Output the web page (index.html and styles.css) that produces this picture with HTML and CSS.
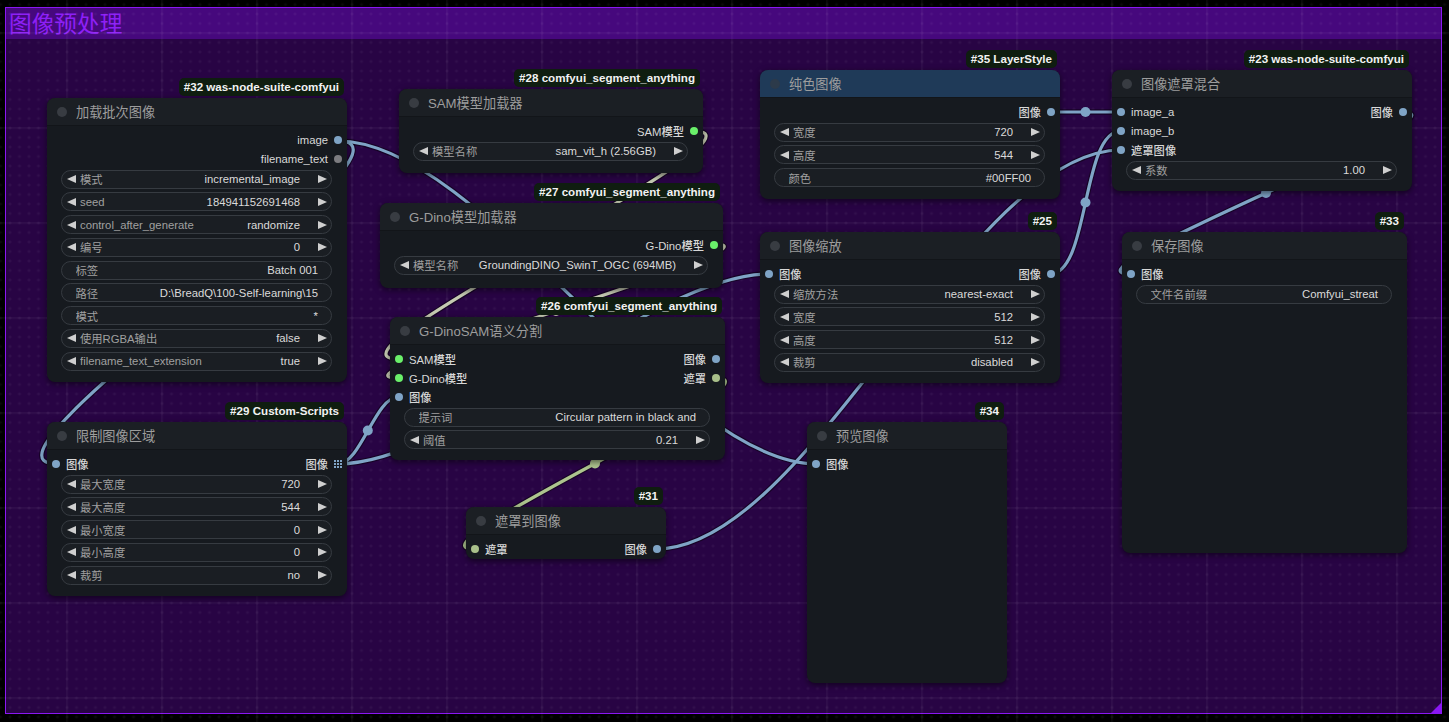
FILE: index.html
```html
<!DOCTYPE html>
<html lang="zh">
<head>
<meta charset="utf-8">
<title>图像预处理</title>
<link rel="stylesheet" href="styles.css">
</head>
<body>
<div class="canvas">
  <div class="group">
    <div class="group-title">图像预处理</div>
    <div class="group-resize"></div>
  </div>

  <svg class="grid" width="1449" height="722" viewBox="0 0 1449 722">
    <defs>
      <pattern id="plus" x="62.25" y="28.25" width="9.5" height="9.5" patternUnits="userSpaceOnUse">
        <path d="M3.25 4.75h3M4.75 3.25v3" stroke="rgba(255,255,255,0.055)" stroke-width="1" fill="none"/>
      </pattern>
      <pattern id="lines" x="66.25" y="32.25" width="95" height="95" patternUnits="userSpaceOnUse">
        <rect x="0" y="0" width="1.5" height="95" fill="rgba(255,255,255,0.05)"/>
        <rect x="1.5" y="0" width="93.5" height="1.5" fill="rgba(255,255,255,0.05)"/>
      </pattern>
    </defs>
    <rect width="1449" height="722" fill="url(#plus)"/>
    <rect width="1449" height="722" fill="url(#lines)"/>
  </svg>

  <svg class="links" width="1449" height="722" viewBox="0 0 1449 722">
    <defs>
      <path id="l1" d="M338 141 C445 141 -50 464 57 464"/>
      <path id="l2" d="M338 141 C482.5 141 672.5 464 817 464"/>
      <path id="l3" d="M338 464 C360.5 464 375.5 397 398 397"/>
      <path id="l4" d="M338 464 C455.8 464 651.2 274 769 274"/>
      <path id="l5" d="M694 131 C787.4 131 304.6 359 398 359"/>
      <path id="l6" d="M714 244 C799.8 244 312.2 378 398 378"/>
      <path id="l7" d="M716 378 C790 378 400 549 474 549"/>
      <path id="l9" d="M656 549 C809.2 549 967.8 150 1121 150"/>
      <path id="l10" d="M1050 112 C1067.75 112 1103.25 112 1121 112"/>
      <path id="l11" d="M1050 274 C1089.9 274 1081.1 131 1121 131"/>
      <path id="l12" d="M1402 112 C1481.1 112 1050.9 274 1130 274"/>
    </defs>
    <g fill="none" stroke="rgba(0,0,0,0.45)" stroke-width="5.5">
      <use href="#l1"/><use href="#l2"/><use href="#l3"/><use href="#l4"/><use href="#l5"/><use href="#l6"/>
      <use href="#l7"/><use href="#l9"/><use href="#l10"/><use href="#l11"/><use href="#l12"/>
    </g>
    <g fill="none" stroke-width="3.2" stroke-linecap="round">
      <g stroke="#7fa4c6">
        <use href="#l1"/><use href="#l2"/><use href="#l3"/><use href="#l4"/>
        <use href="#l9"/><use href="#l10"/><use href="#l11"/><use href="#l12"/>
      </g>
      <g stroke="#c5cab2"><use href="#l5"/><use href="#l6"/></g>
      <g stroke="#adc48e"><use href="#l7"/></g>
    </g>
    <g fill="#7fa4c6">
      <circle cx="197.5" cy="302.5" r="5"/>
      <circle cx="577.6" cy="302.5" r="5"/>
      <circle cx="367.8" cy="430.5" r="5"/>
      <circle cx="553.5" cy="369" r="5"/>
      <circle cx="888.5" cy="349.5" r="5"/>
      <circle cx="1085.5" cy="112" r="5"/>
      <circle cx="1085.5" cy="202.5" r="5"/>
      <circle cx="1266" cy="193" r="5"/>
    </g>
    <g fill="#c5cab2">
      <circle cx="546" cy="245" r="5"/>
      <circle cx="556" cy="311" r="5"/>
    </g>
    <circle cx="595" cy="463.5" r="5" fill="#adc48e"/>
  </svg>

  <!-- #32 加载批次图像 -->
  <div class="node n32">
    <div class="badge">#32 was-node-suite-comfyui</div>
    <div class="title"><span class="tdot"></span><span class="ttext">加载批次图像</span></div>
    <div class="body">
      <div class="row"><div class="out"><span>image</span><span class="dot img"></span></div></div>
      <div class="row"><div class="out"><span>filename_text</span><span class="dot str"></span></div></div>
      <div class="widgets">
        <div class="w"><span class="al"></span><span class="wl">模式</span><span class="wv">incremental_image</span><span class="ar"></span></div>
        <div class="w"><span class="al"></span><span class="wl">seed</span><span class="wv">184941152691468</span><span class="ar"></span></div>
        <div class="w"><span class="al"></span><span class="wl">control_after_generate</span><span class="wv">randomize</span><span class="ar"></span></div>
        <div class="w"><span class="al"></span><span class="wl">编号</span><span class="wv">0</span><span class="ar"></span></div>
        <div class="w t"><span class="wl">标签</span><span class="wv">Batch 001</span></div>
        <div class="w t"><span class="wl">路径</span><span class="wv">D:\BreadQ\100-Self-learning\15</span></div>
        <div class="w t"><span class="wl">模式</span><span class="wv">*</span></div>
        <div class="w"><span class="al"></span><span class="wl">使用RGBA输出</span><span class="wv">false</span><span class="ar"></span></div>
        <div class="w"><span class="al"></span><span class="wl">filename_text_extension</span><span class="wv">true</span><span class="ar"></span></div>
      </div>
    </div>
  </div>

  <!-- #28 SAM模型加载器 -->
  <div class="node n28">
    <div class="badge">#28 comfyui_segment_anything</div>
    <div class="title"><span class="tdot"></span><span class="ttext">SAM模型加载器</span></div>
    <div class="body">
      <div class="row"><div class="out"><span>SAM模型</span><span class="dot model"></span></div></div>
      <div class="widgets">
        <div class="w"><span class="al"></span><span class="wl">模型名称</span><span class="wv">sam_vit_h (2.56GB)</span><span class="ar"></span></div>
      </div>
    </div>
  </div>

  <!-- #27 G-Dino模型加载器 -->
  <div class="node n27">
    <div class="badge">#27 comfyui_segment_anything</div>
    <div class="title"><span class="tdot"></span><span class="ttext">G-Dino模型加载器</span></div>
    <div class="body">
      <div class="row"><div class="out"><span>G-Dino模型</span><span class="dot model"></span></div></div>
      <div class="widgets">
        <div class="w"><span class="al"></span><span class="wl">模型名称</span><span class="wv">GroundingDINO_SwinT_OGC (694MB)</span><span class="ar"></span></div>
      </div>
    </div>
  </div>

  <!-- #26 G-DinoSAM语义分割 -->
  <div class="node n26">
    <div class="badge">#26 comfyui_segment_anything</div>
    <div class="title"><span class="tdot"></span><span class="ttext">G-DinoSAM语义分割</span></div>
    <div class="body">
      <div class="row"><div class="in"><span class="dot model"></span><span>SAM模型</span></div><div class="out"><span>图像</span><span class="dot img"></span></div></div>
      <div class="row"><div class="in"><span class="dot model"></span><span>G-Dino模型</span></div><div class="out"><span>遮罩</span><span class="dot mask"></span></div></div>
      <div class="row"><div class="in"><span class="dot img"></span><span>图像</span></div></div>
      <div class="widgets">
        <div class="w t"><span class="wl">提示词</span><span class="wv">Circular pattern in black and</span></div>
        <div class="w"><span class="al"></span><span class="wl">阈值</span><span class="wv">0.21</span><span class="ar"></span></div>
      </div>
    </div>
  </div>

  <!-- #35 纯色图像 -->
  <div class="node n35 blue">
    <div class="badge">#35 LayerStyle</div>
    <div class="title"><span class="tdot"></span><span class="ttext">纯色图像</span></div>
    <div class="body">
      <div class="row"><div class="out"><span>图像</span><span class="dot img"></span></div></div>
      <div class="widgets">
        <div class="w"><span class="al"></span><span class="wl">宽度</span><span class="wv">720</span><span class="ar"></span></div>
        <div class="w"><span class="al"></span><span class="wl">高度</span><span class="wv">544</span><span class="ar"></span></div>
        <div class="w t"><span class="wl">颜色</span><span class="wv">#00FF00</span></div>
      </div>
    </div>
  </div>

  <!-- #25 图像缩放 -->
  <div class="node n25">
    <div class="badge">#25</div>
    <div class="title"><span class="tdot"></span><span class="ttext">图像缩放</span></div>
    <div class="body">
      <div class="row"><div class="in"><span class="dot img"></span><span>图像</span></div><div class="out"><span>图像</span><span class="dot img"></span></div></div>
      <div class="widgets">
        <div class="w"><span class="al"></span><span class="wl">缩放方法</span><span class="wv">nearest-exact</span><span class="ar"></span></div>
        <div class="w"><span class="al"></span><span class="wl">宽度</span><span class="wv">512</span><span class="ar"></span></div>
        <div class="w"><span class="al"></span><span class="wl">高度</span><span class="wv">512</span><span class="ar"></span></div>
        <div class="w"><span class="al"></span><span class="wl">裁剪</span><span class="wv">disabled</span><span class="ar"></span></div>
      </div>
    </div>
  </div>

  <!-- #23 图像遮罩混合 -->
  <div class="node n23">
    <div class="badge">#23 was-node-suite-comfyui</div>
    <div class="title"><span class="tdot"></span><span class="ttext">图像遮罩混合</span></div>
    <div class="body">
      <div class="row"><div class="in"><span class="dot img"></span><span>image_a</span></div><div class="out"><span>图像</span><span class="dot img"></span></div></div>
      <div class="row"><div class="in"><span class="dot img"></span><span>image_b</span></div></div>
      <div class="row"><div class="in"><span class="dot img"></span><span>遮罩图像</span></div></div>
      <div class="widgets">
        <div class="w"><span class="al"></span><span class="wl">系数</span><span class="wv">1.00</span><span class="ar"></span></div>
      </div>
    </div>
  </div>

  <!-- #33 保存图像 -->
  <div class="node n33">
    <div class="badge">#33</div>
    <div class="title"><span class="tdot"></span><span class="ttext">保存图像</span></div>
    <div class="body">
      <div class="row"><div class="in"><span class="dot img"></span><span>图像</span></div></div>
      <div class="widgets">
        <div class="w t"><span class="wl">文件名前缀</span><span class="wv">Comfyui_streat</span></div>
      </div>
    </div>
  </div>

  <!-- #29 限制图像区域 -->
  <div class="node n29">
    <div class="badge">#29 Custom-Scripts</div>
    <div class="title"><span class="tdot"></span><span class="ttext">限制图像区域</span></div>
    <div class="body">
      <div class="row"><div class="in"><span class="dot img"></span><span>图像</span></div><div class="out"><span>图像</span>
        <svg class="gicon" width="8" height="8" viewBox="0 0 8 8"><g fill="#7fa4c6"><rect x="0" y="0" width="2" height="2"/><rect x="3" y="0" width="2" height="2"/><rect x="6" y="0" width="2" height="2"/><rect x="0" y="3" width="2" height="2"/><rect x="3" y="3" width="2" height="2"/><rect x="6" y="3" width="2" height="2"/><rect x="0" y="6" width="2" height="2"/><rect x="3" y="6" width="2" height="2"/><rect x="6" y="6" width="2" height="2"/></g></svg></div></div>
      <div class="widgets">
        <div class="w"><span class="al"></span><span class="wl">最大宽度</span><span class="wv">720</span><span class="ar"></span></div>
        <div class="w"><span class="al"></span><span class="wl">最大高度</span><span class="wv">544</span><span class="ar"></span></div>
        <div class="w"><span class="al"></span><span class="wl">最小宽度</span><span class="wv">0</span><span class="ar"></span></div>
        <div class="w"><span class="al"></span><span class="wl">最小高度</span><span class="wv">0</span><span class="ar"></span></div>
        <div class="w"><span class="al"></span><span class="wl">裁剪</span><span class="wv">no</span><span class="ar"></span></div>
      </div>
    </div>
  </div>

  <!-- #31 遮罩到图像 -->
  <div class="node n31">
    <div class="badge">#31</div>
    <div class="title"><span class="tdot"></span><span class="ttext">遮罩到图像</span></div>
    <div class="body">
      <div class="row"><div class="in"><span class="dot mask"></span><span>遮罩</span></div><div class="out"><span>图像</span><span class="dot img"></span></div></div>
    </div>
  </div>

  <!-- #34 预览图像 -->
  <div class="node n34">
    <div class="badge">#34</div>
    <div class="title"><span class="tdot"></span><span class="ttext">预览图像</span></div>
    <div class="body">
      <div class="row"><div class="in"><span class="dot img"></span><span>图像</span></div></div>
    </div>
  </div>
</div>
</body>
</html>
```

FILE: styles.css
```css
* { box-sizing: border-box; }

html, body {
  margin: 0;
  padding: 0;
  background: #000;
  overflow: hidden;
}

body {
  font-family: "Liberation Sans", "Noto Sans CJK SC", sans-serif;
}

.canvas {
  position: relative;
  width: 1449px;
  height: 722px;
  overflow: hidden;
  background: #000;
}

/* ---------- group ---------- */
.group {
  position: absolute;
  left: 5px;
  top: 7px;
  width: 1437px;
  height: 707px;
  border: 1.5px solid #8a17f2;
  background: #280444;
}

.group-title {
  height: 30.5px;
  background: #46087d;
  color: #8d1ff6;
  font-family: "Noto Sans CJK SC", sans-serif;
  font-size: 22.7px;
  line-height: 29px;
  padding-left: 3px;
  white-space: nowrap;
}

.group-resize {
  position: absolute;
  right: 0;
  bottom: 0;
  width: 0;
  height: 0;
  border-left: 10px solid transparent;
  border-bottom: 10px solid #8a17f2;
}

.grid, .links {
  position: absolute;
  left: 0;
  top: 0;
}

/* ---------- nodes ---------- */
.node {
  position: absolute;
  background: #161a1f;
  border-radius: 8px;
  box-shadow: 0 2px 6px rgba(0, 0, 0, 0.55);
  color: #d6d6d6;
}

.n32 { left: 47px;   top: 98px;  width: 300px; height: 284px; }
.n28 { left: 399px;  top: 89px;  width: 304px; height: 84px; }
.n27 { left: 380px;  top: 203px; width: 343px; height: 85px; }
.n26 { left: 390px;  top: 317px; width: 335px; height: 143px; }
.n35 { left: 760px;  top: 70px;  width: 300px; height: 129px; }
.n25 { left: 760px;  top: 232px; width: 300px; height: 151px; }
.n23 { left: 1112px; top: 70px;  width: 300px; height: 121px; }
.n33 { left: 1122px; top: 232px; width: 285px; height: 321px; }
.n29 { left: 47px;   top: 422px; width: 300px; height: 174px; }
.n31 { left: 466px;  top: 507px; width: 200px; height: 52px; }
.n34 { left: 807px;  top: 422px; width: 200px; height: 261px; }

.badge {
  position: absolute;
  right: 3px;
  bottom: calc(100% + 2.5px);
  height: 18px;
  line-height: 18px;
  padding: 0 5px;
  border-radius: 5px;
  background: #0f1d10;
  color: #f2f2f2;
  font-weight: bold;
  font-size: 11.6px;
  white-space: nowrap;
}

.title {
  height: 28px;
  display: flex;
  align-items: center;
  padding-left: 10px;
  background: #1b1f24;
  border-radius: 8px 8px 0 0;
  border-bottom: 1px solid #121519;
}

.blue .title {
  background: #1f3a58;
}

.tdot {
  width: 10px;
  height: 10px;
  border-radius: 50%;
  background: #383c42;
  margin-right: 9px;
  flex: none;
}

.blue .tdot {
  background: #2c3a4a;
}

.ttext {
  font-size: 13.2px;
  color: #9d9d9d;
  white-space: nowrap;
}

.body {
  padding-top: 4.5px;
}

/* slots */
.row {
  display: flex;
  align-items: center;
  height: 19px;
  font-size: 11.3px;
  font-weight: 500;
  color: #d8d8d8;
  white-space: nowrap;
}

.in, .out {
  display: flex;
  align-items: center;
  gap: 6px;
}

.in { padding-left: 5px; }

.out {
  padding-right: 5px;
  margin-left: auto;
}

.dot {
  width: 8px;
  height: 8px;
  border-radius: 50%;
  flex: none;
}

.img   { background: #7fa4c6; }
.str   { background: #7c7c80; }
.model { background: #6af06a; }
.mask  { background: #a9c08a; }

.gicon {
  display: block;
  flex: none;
}

/* widgets */
.widgets {
  display: flex;
  flex-direction: column;
  gap: 3.75px;
  padding: 1px 15px 0 13.5px;
}

.w {
  height: 19px;
  border: 1px solid #363b41;
  border-radius: 10px;
  background: #1a1e23;
  display: flex;
  align-items: center;
  font-size: 11.3px;
  padding: 0 4px 0 5.5px;
  white-space: nowrap;
  overflow: hidden;
}

.w.t {
  padding: 0 13px 0 14px;
}

.al {
  flex: none;
  width: 0;
  height: 0;
  border-right: 9px solid #cfcfcf;
  border-top: 4.5px solid transparent;
  border-bottom: 4.5px solid transparent;
  margin-right: 4px;
}

.ar {
  flex: none;
  width: 0;
  height: 0;
  border-left: 9px solid #cfcfcf;
  border-top: 4.5px solid transparent;
  border-bottom: 4.5px solid transparent;
  margin-left: 18px;
}

.wl {
  flex: 1;
  color: #a0a0a0;
  overflow: hidden;
}

.wv {
  color: #dadada;
}
```
